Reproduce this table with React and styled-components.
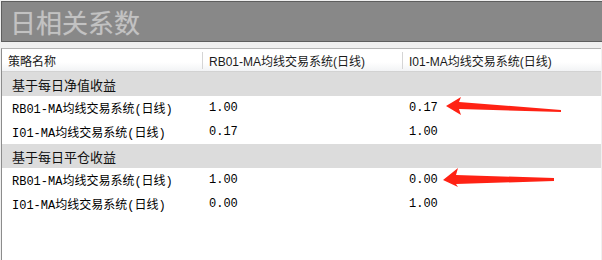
import React from "react";
import styled, { createGlobalStyle } from "styled-components";

const Global = createGlobalStyle`
  html, body { margin: 0; padding: 0; background: #f0f0f0; }
  * { box-sizing: border-box; }
`;

const Page = styled.div`
  position: relative;
  width: 602px;
  height: 260px;
  display: flex;
  flex-direction: column;
  background: #f0f0f0;
  overflow: hidden;
`;

const TitleBar = styled.div`
  height: 41px;
  margin-top: 1px;
  margin-left: 1px;
  border: 1px solid #5e5e5e;
  border-right: none;
  background: #888888;
  display: flex;
  align-items: center;
  padding-left: 8px;
  font-family: "Noto Sans CJK SC", sans-serif;
  font-size: 26px;
  color: #c2c2c2;
  letter-spacing: 0px;
  text-shadow: 0 0 1px #a8a8a8;
`;

const Panel = styled.div`
  flex: 1;
  margin-top: 6px;
  margin-left: 1px;
  margin-right: 1px;
  border-left: 1px solid #8c8c8c;
  border-top: 1px solid #b4b4b4;
  background: #ffffff;
  display: flex;
  flex-direction: column;
`;

const Grid = styled.div`
  display: grid;
  grid-template-columns: 201px 200px 1fr;
`;

const HeadCell = styled.div`
  position: relative;
  height: 23px;
  border-bottom: 1px solid #d2d2d2;
  background: linear-gradient(#ffffff, #ffffff 60%, #f2f3f5);
  display: flex;
  align-items: center;
  padding-left: ${(p) => (p.$first ? "6px" : "6px")};
  font-family: "Liberation Sans", "Noto Sans CJK SC", sans-serif;
  font-size: 12px;
  color: #1a1a1a;
  white-space: nowrap;
  &::after {
    content: "";
    display: ${(p) => (p.$last ? "none" : "block")};
    position: absolute;
    right: 0;
    top: 3px;
    bottom: 2px;
    width: 1px;
    background: #d5d5d5;
  }
`;

const GroupRow = styled.div`
  grid-column: 1 / -1;
  height: 24px;
  background: #dcdcdc;
  display: flex;
  align-items: center;
  padding-left: 10px;
  font-family: "Noto Sans CJK SC", sans-serif;
  font-size: 13px;
  color: #111;
`;

const Cell = styled.div`
  height: 24px;
  display: flex;
  align-items: center;
  padding-left: ${(p) => (p.$label ? "10px" : "6px")};
  font-family: "Liberation Mono", "Noto Sans CJK SC", monospace;
  font-size: 12px;
  color: #000;
  white-space: nowrap;
`;

const Overlay = styled.svg`
  position: absolute;
  left: 0;
  top: 0;
  pointer-events: none;
`;

const groups = [
  {
    title: "基于每日净值收益",
    rows: [
      ["RB01-MA均线交易系统(日线)", "1.00", "0.17"],
      ["I01-MA均线交易系统(日线)", "0.17", "1.00"],
    ],
  },
  {
    title: "基于每日平仓收益",
    rows: [
      ["RB01-MA均线交易系统(日线)", "1.00", "0.00"],
      ["I01-MA均线交易系统(日线)", "0.00", "1.00"],
    ],
  },
];

export default function App() {
  return (
    <Page>
      <Global />
      <TitleBar>日相关系数</TitleBar>
      <Panel>
        <Grid>
          <HeadCell $first>策略名称</HeadCell>
          <HeadCell>RB01-MA均线交易系统(日线)</HeadCell>
          <HeadCell $last>I01-MA均线交易系统(日线)</HeadCell>
          {groups.map((g) => (
            <React.Fragment key={g.title}>
              <GroupRow>{g.title}</GroupRow>
              {g.rows.map((r, i) => (
                <React.Fragment key={i}>
                  <Cell $label>{r[0]}</Cell>
                  <Cell>{r[1]}</Cell>
                  <Cell>{r[2]}</Cell>
                </React.Fragment>
              ))}
            </React.Fragment>
          ))}
        </Grid>
      </Panel>
      <Overlay width="602" height="260" viewBox="0 0 602 260">
        <polygon
          fill="#ff2214"
          points="446,106 461,97 459,102 561,110 561,112 459,109 461,115"
        />
        <polygon
          fill="#ff2214"
          points="443,180 458,168 456,175 554,178 554,181 456,184 458,187"
        />
      </Overlay>
    </Page>
  );
}
